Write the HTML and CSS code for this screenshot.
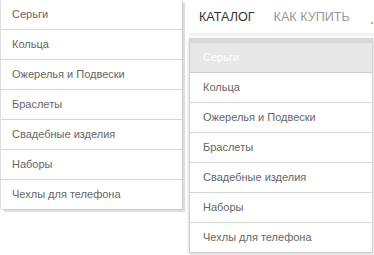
FILE: index.html
```
<!DOCTYPE html>
<html lang="ru">

<head>
    <meta charset="UTF-8">
    <meta name="viewport" content="width=device-width, initial-scale=1.0">
    <title>Каталог</title>
    <link rel="stylesheet" href="styles.css">
</head>

<body>
    <div class="shot shot-left">
        <ul class="drop-menu">
            <li>Серьги</li>
            <li>Кольца</li>
            <li>Ожерелья и Подвески</li>
            <li>Браслеты</li>
            <li>Свадебные изделия</li>
            <li>Наборы</li>
            <li>Чехлы для телефона</li>
        </ul>
    </div>

    <div class="shot shot-right">
        <nav class="top-nav">
            <a class="nav-link active">Каталог</a>
            <a class="nav-link">Как купить</a>
            <span class="nav-more"></span>
        </nav>
        <ul class="drop-menu framed">
            <li class="current">Серьги</li>
            <li>Кольца</li>
            <li>Ожерелья и Подвески</li>
            <li>Браслеты</li>
            <li>Свадебные изделия</li>
            <li>Наборы</li>
            <li>Чехлы для телефона</li>
        </ul>
    </div>
</body>

</html>
```
FILE: styles.css
```
body {
    margin: 0;
    background-color: #fff;
    font-family: "Liberation Sans", Arial, sans-serif;
    display: flex;
    height: 255px;
    overflow: hidden;
}

.shot-left {
    width: 188px;
    padding-left: 1px;
}

.shot-right {
    flex: 1;
    min-width: 0;
}

.drop-menu {
    list-style: none;
    margin: 0;
    padding: 0;
    background-color: #fff;
}

.drop-menu li {
    height: 29px;
    line-height: 29px;
    padding-left: 11px;
    border-bottom: 1px solid #d6d6d6;
    font-size: 11px;
    color: #666;
}

.drop-menu li:last-child {
    border-bottom: none;
}

.shot-left .drop-menu {
    width: 181px;
    box-shadow: 1px 1px 0 #ccc, 3px 3px 0 #ddd, -1px 0 0 #ddd;
}

.top-nav {
    height: 33px;
    display: flex;
    align-items: center;
    padding-left: 10px;
    gap: 19px;
    white-space: nowrap;
    border-bottom: 3px solid #f2f2f2;
}

.nav-link {
    font-size: 12.6px;
    text-transform: uppercase;
    color: #999;
}

.nav-link.active {
    color: #333;
}

.nav-more {
    width: 2px;
    height: 2px;
    margin-left: auto;
    margin-right: 1px;
    margin-top: 12px;
    background-color: #e0b070;
}

.drop-menu.framed {
    width: 182px;
    margin-top: 2px;
    border: 1px solid #cfcfcf;
    border-top: 5px solid #d9d9d9;
    box-shadow: 0 1px 3px rgba(0, 0, 0, 0.2);
}

.drop-menu.framed li {
    padding-left: 13px;
}

.drop-menu.framed li.current {
    background-color: #e8e8e8;
    color: #fff;
    border-bottom-color: #cfcfcf;
}
```
